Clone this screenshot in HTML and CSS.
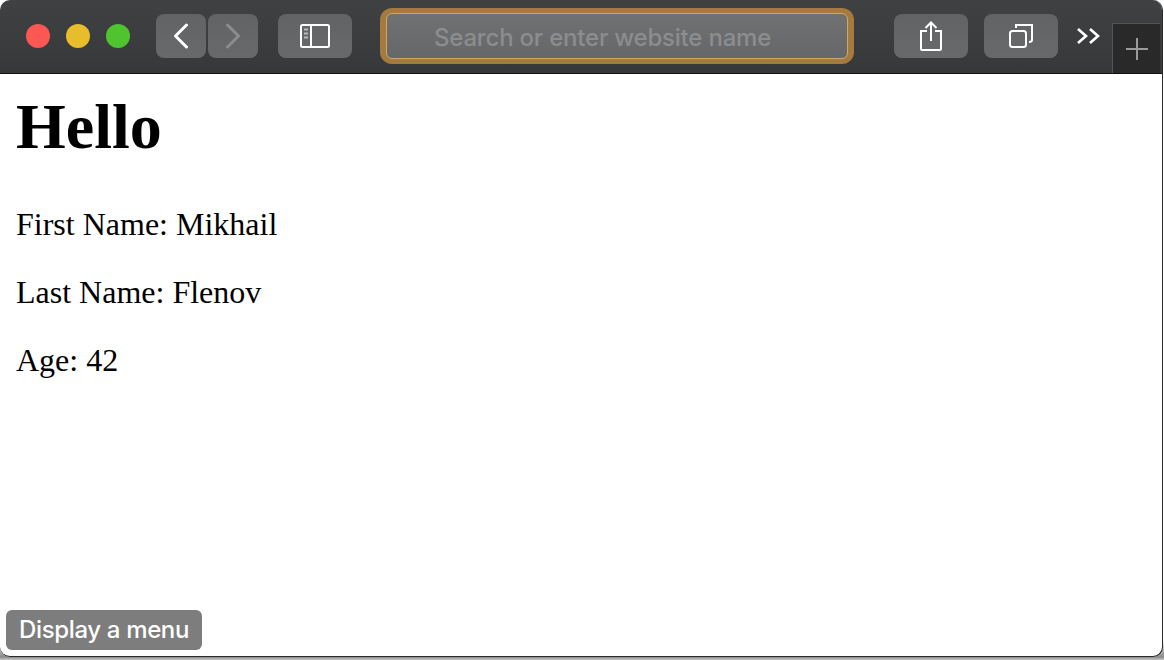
FILE: index.html
```html
<!DOCTYPE html>
<html lang="en">
<head>
  <meta charset="UTF-8">
  <meta name="viewport" content="width=device-width, initial-scale=1.0">
  <title>Hello</title>
  <link rel="stylesheet" href="styles.css">
</head>
<body>
  <div class="window">
    <div class="toolbar">
      <div class="lights">
        <span class="light red"></span>
        <span class="light yellow"></span>
        <span class="light green"></span>
      </div>
      <div class="nav">
        <div class="btn nav-btn">
          <svg width="16" height="26" viewBox="0 0 16 26"><path d="M13.500 2 L2.500 13 L13.500 24" fill="none" stroke="#fff" stroke-width="3" stroke-linecap="round" stroke-linejoin="round"/></svg>
        </div>
        <div class="btn nav-btn">
          <svg width="16" height="26" viewBox="0 0 16 26"><path d="M2.500 2 L13.500 13 L2.500 24" fill="none" stroke="#8b8c8d" stroke-width="3" stroke-linecap="round" stroke-linejoin="round"/></svg>
        </div>
      </div>
      <div class="btn wide-btn sidebar-btn">
        <svg width="30" height="24" viewBox="0 0 30 24"><rect x="1" y="1" width="28" height="22" rx="1.5" fill="none" stroke="#fff" stroke-width="2"/><path d="M11 1 V23" stroke="#fff" stroke-width="2"/><path d="M4 5.5 H8 M4 9.5 H8 M4 13.5 H8" stroke="#b9b9ba" stroke-width="2"/></svg>
      </div>
      <div class="address">
        <div class="address-field">Search or enter website name</div>
      </div>
      <div class="btn wide-btn share-btn">
        <svg width="24" height="30" viewBox="0 0 24 30"><path d="M8 10 H2 V28 Q2 29 3 29 H21 Q22 29 22 28 V10 H16" fill="none" stroke="#fff" stroke-width="2"/><path d="M12 20 V2 M6.500 7 L12 1.500 L17.500 7" fill="none" stroke="#fff" stroke-width="2"/></svg>
      </div>
      <div class="btn wide-btn tabs-btn">
        <svg width="26" height="24" viewBox="0 0 26 24"><rect x="2" y="7" width="16" height="16" rx="2.500" fill="none" stroke="#fff" stroke-width="2"/><path d="M8 4 V1 H24 V16 Q24 18 21 18" fill="none" stroke="#fff" stroke-width="2"/></svg>
      </div>
      <div class="more">
        <svg width="24" height="18" viewBox="0 0 24 18"><path d="M2 2 L10 9 L2 16 M14 2 L22 9 L14 16" fill="none" stroke="#fff" stroke-width="2.600"/></svg>
      </div>
      <div class="new-tab">
        <svg width="22" height="22" viewBox="0 0 22 22"><path d="M11 0 V22 M0 11 H22" stroke="#9a9a9a" stroke-width="2"/></svg>
      </div>
    </div>
    <div class="content">
      <h1>Hello</h1>
      <p>First Name: Mikhail</p>
      <p>Last Name: Flenov</p>
      <p>Age: 42</p>
      <div class="menu-tag">Display a menu</div>
    </div>
  </div>
</body>
</html>
```

FILE: styles.css
```css
html, body {
  margin: 0;
  height: 100%;
}
body {
  background: linear-gradient(#fff 0, #fff 640px, #8a8a8a 657px, #c8c8c8 660px);
  overflow: hidden;
}
.window {
  width: 1163px;
  height: 657px;
  box-sizing: border-box;
  display: flex;
  flex-direction: column;
  background: #fff;
  border-right: 1px solid #2a2a2a;
  border-bottom: 1px solid #2a2a2a;
  border-radius: 10px;
  overflow: hidden;
}
.toolbar {
  height: 74px;
  flex: none;
  box-sizing: border-box;
  display: flex;
  align-items: flex-start;
  padding: 14px 0 0 26px;
  background: linear-gradient(#404143, #37383a);
  border-bottom: 1px solid #111;
}
.lights {
  display: flex;
  gap: 16px;
  margin-top: 10px;
}
.light {
  width: 24px;
  height: 24px;
  border-radius: 50%;
}
.red { background-color: #fc5753; }
.yellow { background-color: #e8bd2b; }
.green { background-color: #4fc42f; }
.btn {
  height: 44px;
  display: flex;
  align-items: center;
  justify-content: center;
  background: linear-gradient(#626365, #68696b);
  border-radius: 8px;
}
.nav {
  display: flex;
  gap: 2px;
  margin-left: 26px;
}
.nav-btn { width: 50px; }
.wide-btn { width: 74px; }
.sidebar-btn { margin-left: 20px; }
.address {
  width: 474px;
  height: 56px;
  box-sizing: border-box;
  margin: -6px 0 0 28px;
  padding: 5px 6px;
  background-color: #a57a3f;
  border-radius: 12px;
}
.address-field {
  height: 100%;
  box-sizing: border-box;
  border: 1px solid #d2a766;
  border-radius: 6px;
  background: linear-gradient(#707172, #666768);
  color: #8c8d8e;
  font-family: Inter, "Noto Sans", sans-serif;
  font-size: 24px;
  font-weight: 500;
  letter-spacing: -0.2px;
  line-height: 47px;
  padding-left: 47px;
}
.share-btn { margin-left: 40px; }
.tabs-btn { margin-left: 16px; }
.more {
  margin: 13px 0 0 18px;
  height: 18px;
}
.new-tab {
  width: 48px;
  height: 50px;
  box-sizing: border-box;
  margin: 9px 0 0 12px;
  display: flex;
  align-items: center;
  justify-content: center;
  background-color: #29292a;
  border: 1px solid #555;
  border-bottom: none;
  border-right: none;
}
.content {
  flex: 1;
  position: relative;
  padding: 0 16px;
  font-family: "Liberation Serif", "Times New Roman", serif;
  color: #000;
}
h1 {
  margin: 20px 0 46px;
  font-size: 64px;
  line-height: 66px;
  font-weight: bold;
}
p {
  margin: 0 0 32px;
  font-size: 32px;
  line-height: 36px;
}
.menu-tag {
  position: absolute;
  left: 6px;
  bottom: 6px;
  padding: 0 13px;
  height: 40px;
  line-height: 39px;
  background-color: #7d7d7d;
  border-radius: 6px;
  color: #fff;
  font-family: Inter, "Noto Sans", sans-serif;
  font-size: 24px;
  font-weight: 500;
  letter-spacing: -0.35px;
}
```
